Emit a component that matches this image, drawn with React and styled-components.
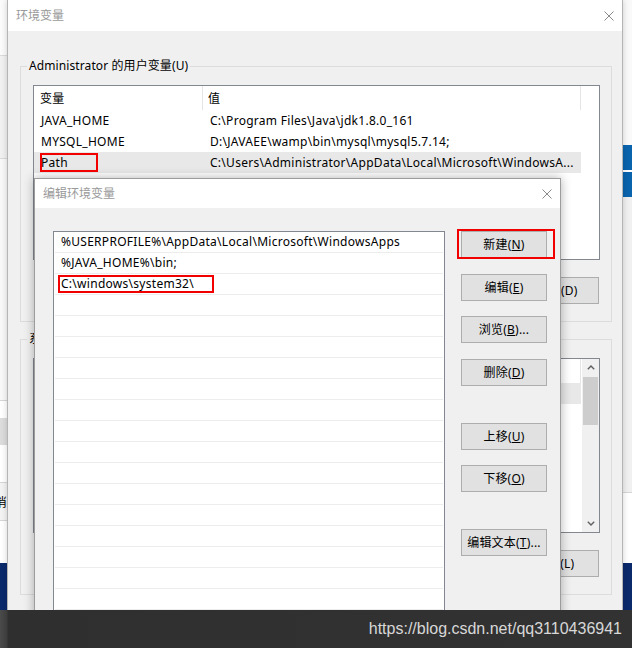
import React from "react";
import styled, { createGlobalStyle } from "styled-components";

const GlobalStyle = createGlobalStyle`
  html, body { margin: 0; padding: 0; }
  body { width: 632px; height: 648px; overflow: hidden; background: #f4f4f4; }
  *, *::before, *::after { box-sizing: border-box; }
`;

const UI_FONT = `"Noto Sans", "Noto Sans CJK SC", sans-serif`;

const Desktop = styled.div`
  position: relative;
  width: 632px;
  height: 648px;
  overflow: hidden;
  background: #f4f4f4;
  font-family: ${UI_FONT};
  font-size: 12px;
  letter-spacing: 0.28px;
  color: #000;
`;

const EdgeStrip = styled.div`
  position: absolute;
  top: 0;
  ${(p) => p.$side}: 0;
  width: ${(p) => p.$w}px;
  height: 610px;
  display: flex;
  flex-direction: column;
  overflow: hidden;
`;

const Band = styled.div`
  flex: none;
  height: ${(p) => p.$h}px;
  background: ${(p) => p.$bg};
  border-bottom: ${(p) => (p.$line ? `1px solid ${p.$line}` : "none")};
  display: flex;
  align-items: center;
  justify-content: flex-end;
  overflow: hidden;
  white-space: nowrap;
`;

const Window = styled.section`
  position: absolute;
  left: ${(p) => p.$x}px;
  top: ${(p) => p.$y}px;
  width: ${(p) => p.$w}px;
  height: ${(p) => p.$h}px;
  display: flex;
  flex-direction: column;
  background: #f0f0f0;
  border: 1px solid ${(p) => p.$border};
  ${(p) => (p.$noTop ? "border-top: none;" : "")}
  box-shadow: ${(p) => p.$shadow};
  overflow: hidden;
`;

const TitleBar = styled.header`
  flex: none;
  height: ${(p) => p.$h}px;
  background: #fff;
  display: flex;
  align-items: center;
  justify-content: space-between;
  padding: 0 ${(p) => p.$pr}px 0 ${(p) => p.$pl}px;
`;

const TitleText = styled.span`
  color: #999;
  font-size: 12px;
  line-height: 16px;
  letter-spacing: 0;
`;

const CloseGlyph = styled.svg`
  width: 10px;
  height: 10px;
  display: block;
`;

const CloseIcon = () => (
  <CloseGlyph viewBox="0 0 10 10">
    <path d="M0.5 0.5 L9.5 9.5 M9.5 0.5 L0.5 9.5" stroke="#8a8a8a" strokeWidth="1" fill="none" />
  </CloseGlyph>
);

const DialogBody = styled.div`
  display: flex;
  flex-direction: column;
  gap: 9px;
  padding: 27px 10px 0 12px;
`;

const GroupBox = styled.fieldset`
  margin: 0;
  min-width: 0;
  border: 1px solid #dcdcdc;
  padding: 11px 11px 17px 12px;
`;

const Legend = styled.legend`
  padding: 0 2px;
  margin-left: -6px;
  font-size: 12px;
  line-height: 16px;
  letter-spacing: 0.1px;
`;

const ListBox = styled.div`
  height: 175px;
  border: 1px solid #828790;
  background: #fff;
  display: flex;
  overflow: hidden;
`;

const ListContent = styled.div`
  flex: 1;
  min-width: 0;
  overflow: hidden;
`;

const ListHeader = styled.div`
  display: grid;
  grid-template-columns: 169px 378px 1fr;
  height: 24px;
`;

const HeaderCell = styled.div`
  display: flex;
  align-items: center;
  padding-left: ${(p) => p.$pl}px;
  border-right: ${(p) => (p.$last ? "none" : "1px solid #e5e5e5")};
`;

const ListRow = styled.div`
  display: grid;
  grid-template-columns: 169px 378px;
  width: 547px;
  height: 21px;
  background: ${(p) => (p.$selected ? "#e8e8e8" : "transparent")};
`;

const Cell = styled.div`
  padding-left: 7px;
  line-height: 21px;
  white-space: nowrap;
  overflow: hidden;
`;

const ButtonRow = styled.div`
  display: flex;
  justify-content: flex-end;
  gap: 10px;
  margin: 17px 1px 0 0;
`;

const Button = styled.button`
  flex: none;
  width: ${(p) => p.$w || 86}px;
  height: 27px;
  margin: ${(p) => p.$mt || 0}px 0 0 0;
  padding: 0;
  background: #e1e1e1;
  border: 1px solid #adadad;
  border-radius: 0;
  font-family: ${UI_FONT};
  font-size: 12px;
  letter-spacing: 0.2px;
  color: #000;
  display: flex;
  align-items: center;
  justify-content: center;
  white-space: nowrap;
`;

const Label = styled.span`
  display: inline-block;
  line-height: 16px;
`;

const Scrollbar = styled.div`
  flex: none;
  width: 17px;
  background: #f0f0f0;
  display: flex;
  flex-direction: column;
`;

const ArrowBox = styled.div`
  flex: none;
  height: 17px;
  display: flex;
  align-items: center;
  justify-content: center;
`;

const Thumb = styled.div`
  flex: none;
  height: 48px;
  margin: 1px 1px 0;
  background: #cdcdcd;
`;

const Track = styled.div`
  flex: 1;
`;

const ChevronSvg = styled.svg`
  display: block;
`;

const Chevron = ({ down }) => (
  <ChevronSvg width="8" height="5" viewBox="0 0 8 5">
    <path
      d={down ? "M0.8 0.8 L4 4 L7.2 0.8" : "M0.8 4.2 L4 1 L7.2 4.2"}
      stroke="#606060"
      strokeWidth="1.4"
      fill="none"
    />
  </ChevronSvg>
);

const EditBody = styled.div`
  flex: 1;
  display: flex;
  align-items: flex-start;
  gap: 16px;
  padding: 23px 13px 0 18px;
`;

const PathList = styled.div`
  flex: none;
  width: 392px;
  height: 420px;
  border: 1px solid #828790;
  background: #fff;
  padding: 0 1px;
  overflow: hidden;
`;

const PathRow = styled.div`
  height: 21px;
  border-bottom: 1px solid #ececec;
  padding-left: 6px;
  line-height: 20px;
  white-space: nowrap;
  overflow: hidden;
`;

const ButtonColumn = styled.div`
  flex: none;
  width: 86px;
  display: flex;
  flex-direction: column;
`;

const Mark = styled.div`
  position: absolute;
  left: ${(p) => p.$x}px;
  top: ${(p) => p.$y}px;
  width: ${(p) => p.$w}px;
  height: ${(p) => p.$h}px;
  border: 2px solid #f20000;
  pointer-events: none;
`;

const Taskbar = styled.footer`
  position: absolute;
  left: 0;
  right: 0;
  bottom: 0;
  height: 38px;
  display: flex;
  align-items: center;
  justify-content: flex-end;
  padding-right: 10px;
  background: linear-gradient(to right, #4b4b4b 0, #3c3c3c 7px, #2f2f2f 8px, #323232 100%);
`;

const Watermark = styled.span`
  font-family: "Liberation Sans", Arial, sans-serif;
  font-size: 16px;
  letter-spacing: 0;
  color: rgba(255, 255, 255, 0.82);
`;

const userVars = [
  ["JAVA_HOME", "C:\\Program Files\\Java\\jdk1.8.0_161"],
  ["MYSQL_HOME", "D:\\JAVAEE\\wamp\\bin\\mysql\\mysql5.7.14;"],
  ["Path", "C:\\Users\\Administrator\\AppData\\Local\\Microsoft\\WindowsA...", true],
  ["TEMP", "%USERPROFILE%\\AppData\\Local\\Temp"],
];

const sysVars = [
  ["ComSpec", "C:\\WINDOWS\\system32\\cmd.exe", true],
  ["DriverData", "C:\\Windows\\System32\\Drivers"],
  ["NUMBER_OF_PROCESSORS", "4"],
  ["OS", "Windows_NT"],
  ["Path", "C:\\WINDOWS\\system32;"],
  ["PATHEXT", ".COM;.EXE;.BAT;.CMD"],
];

const paths = [
  "%USERPROFILE%\\AppData\\Local\\Microsoft\\WindowsApps",
  "%JAVA_HOME%\\bin;",
  "C:\\windows\\system32\\",
  ...Array.from({ length: 18 }, () => ""),
];

const VarList = ({ rows, scroll }) => (
  <ListBox>
    <ListContent>
      <ListHeader>
        <HeaderCell $pl={6}>变量</HeaderCell>
        <HeaderCell $pl={5}>值</HeaderCell>
        <HeaderCell $last />
      </ListHeader>
      {rows.map(([name, value, selected]) => (
        <ListRow key={name} $selected={selected}>
          <Cell>{name}</Cell>
          <Cell>{value}</Cell>
        </ListRow>
      ))}
    </ListContent>
    {scroll && (
      <Scrollbar>
        <ArrowBox>
          <Chevron />
        </ArrowBox>
        <Thumb />
        <Track />
        <ArrowBox>
          <Chevron down />
        </ArrowBox>
      </Scrollbar>
    )}
  </ListBox>
);

const CmdButton = ({ text, mn, tail = "", ...rest }) => (
  <Button {...rest}>
    <Label>
      {text}(<u>{mn}</u>){tail}
    </Label>
  </Button>
);

export default function App() {
  return (
    <>
      <GlobalStyle />
      <Desktop>
        <EdgeStrip $side="left" $w={7}>
          <Band $h={56} $bg="#fbfbfb" $line="#dadada" />
          <Band $h={103} $bg="#f1f1f1" $line="#dadada" />
          <Band $h={242} $bg="#f8f8f8" $line="#d6d6d6" />
          <Band $h={17} $bg="#ffffff" />
          <Band $h={27} $bg="#dcdcdc" />
          <Band $h={38} $bg="#ffffff" $line="#d6d6d6" />
          <Band $h={38} $bg="#f3f3f3" $line="#d6d6d6">取消</Band>
          <Band $h={42} $bg="#ffffff" />
          <Band $h={47} $bg="#0b2a6c" />
        </EdgeStrip>
        <EdgeStrip $side="right" $w={9}>
          <Band $h={145} $bg="#f9f9f9" />
          <Band $h={25} $bg="#0a64ad" />
          <Band $h={2} $bg="#ffffff" />
          <Band $h={25} $bg="#0a64ad" />
          <Band $h={296} $bg="#f0f0f0" $line="#d6d6d6" />
          <Band $h={70} $bg="#ffffff" />
          <Band $h={47} $bg="#0b2a6c" />
        </EdgeStrip>

        <Window $x={7} $y={0} $w={616} $h={660} $border="#b5b5b5" $noTop $shadow="0 0 6px rgba(0,0,0,0.18)">
          <TitleBar $h={31} $pl={8} $pr={8}>
            <TitleText>环境变量</TitleText>
            <CloseIcon />
          </TitleBar>
          <DialogBody>
            <GroupBox>
              <Legend>Administrator 的用户变量(U)</Legend>
              <VarList rows={userVars} />
              <ButtonRow>
                <Button><Label>新建(N)...</Label></Button>
                <Button><Label>编辑(E)...</Label></Button>
                <Button $w={84}><Label>删除(D)</Label></Button>
              </ButtonRow>
            </GroupBox>
            <GroupBox>
              <Legend>系统变量(S)</Legend>
              <VarList rows={sysVars} scroll />
              <ButtonRow>
                <Button><Label>新建(W)...</Label></Button>
                <Button><Label>编辑(I)...</Label></Button>
                <Button $w={88}><Label>删除(L)</Label></Button>
              </ButtonRow>
            </GroupBox>
          </DialogBody>
        </Window>

        <Window $x={34} $y={178} $w={527} $h={480} $border="#9c9c9c" $shadow="0 0 10px rgba(0,0,0,0.3)">
          <TitleBar $h={29} $pl={8} $pr={8}>
            <TitleText>编辑环境变量</TitleText>
            <CloseIcon />
          </TitleBar>
          <EditBody>
            <PathList>
              {paths.map((p, i) => (
                <PathRow key={i}>{p}</PathRow>
              ))}
            </PathList>
            <ButtonColumn>
              <CmdButton text="新建" mn="N" />
              <CmdButton $mt={16} text="编辑" mn="E" />
              <CmdButton $mt={15} text="浏览" mn="B" tail="..." />
              <CmdButton $mt={16} text="删除" mn="D" />
              <CmdButton $mt={37} text="上移" mn="U" />
              <CmdButton $mt={15} text="下移" mn="O" />
              <CmdButton $mt={37} text="编辑文本" mn="T" tail="..." />
            </ButtonColumn>
          </EditBody>
        </Window>

        <Mark $x={40} $y={153} $w={58} $h={19} />
        <Mark $x={58} $y={275} $w={156} $h={18} />
        <Mark $x={457} $y={229} $w={98} $h={30} />

        <Taskbar>
          <Watermark>https://blog.csdn.net/qq3110436941</Watermark>
        </Taskbar>
      </Desktop>
    </>
  );
}
